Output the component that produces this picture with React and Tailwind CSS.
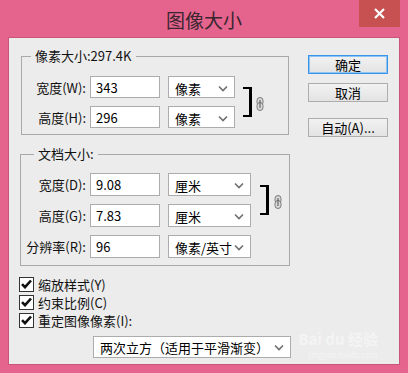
import React from 'react';

const font = { fontFamily: '"Noto Sans CJK SC", "Noto Sans", sans-serif' };

function Chevron() {
  return (
    <svg width="10" height="7" viewBox="0 0 10 7" className="shrink-0">
      <polyline points="1,1.5 5,5.5 9,1.5" fill="none" stroke="#6f6f6f" strokeWidth="1.6" />
    </svg>
  );
}

function LinkIcon() {
  return (
    <svg width="8" height="14" viewBox="0 0 8 14">
      <rect x="1" y="0.5" width="6" height="8" rx="3" fill="#d8d8d8" stroke="#7a7a7a" strokeWidth="1" />
      <rect x="1" y="5.5" width="6" height="8" rx="3" fill="#d8d8d8" stroke="#7a7a7a" strokeWidth="1" />
      <line x1="4" y1="3" x2="4" y2="11" stroke="#555" strokeWidth="1" />
    </svg>
  );
}

function Bracket() {
  return <div className="w-[9px] h-[30px] border-t-2 border-r-[3px] border-b-2 border-black" />;
}

function Row({ label, value, unit, selW, h, labelW }) {
  return (
    <div className={`flex items-center ${h}`}>
      <span className={`${labelW} text-right pr-[4px] text-[13px] text-[#111] leading-none`}>{label}</span>
      <div className="w-[70px] h-full bg-white border border-[#acacac] flex items-center pl-[5px] text-[13px] text-black leading-none">
        {value}
      </div>
      <div className={`${selW} h-full ml-[8px] bg-white border border-[#acacac] flex items-center justify-between pl-[6px] pr-[6px] pt-[2px] text-[13px] text-black leading-none`}>
        <span>{unit}</span>
        <Chevron />
      </div>
    </div>
  );
}

function Check({ label }) {
  return (
    <div className="flex items-center h-[18px]">
      <div className="w-[15px] h-[15px] bg-white border border-[#333] flex items-center justify-center">
        <svg width="11" height="10" viewBox="0 0 11 10">
          <path d="M1 5.2 L4 8.2 L10 1.5" fill="none" stroke="#111" strokeWidth="2.6" />
        </svg>
      </div>
      <span className="ml-[4px] text-[13px] text-[#111] leading-none">{label}</span>
    </div>
  );
}

function Button({ children, primary }) {
  return (
    <div
      className={`w-[80px] h-[19px] flex items-center justify-center text-[13px] text-black leading-none bg-gradient-to-b from-[#f2f2f2] to-[#e3e3e3] border ${
        primary ? 'border-[#3a95e8] shadow-[inset_0_0_0_1px_#8cc3f2]' : 'border-[#adadad]'
      }`}
    >
      {children}
    </div>
  );
}

export default function App() {
  return (
    <div className="w-[408px] h-[373px] bg-[#e5648d] flex flex-col" style={font}>
      {/* Title bar */}
      <div className="relative h-[37px] shrink-0 flex items-center justify-center">
        <span className="text-[19px] text-[#3a2630] leading-none mt-[2px]">图像大小</span>
        <div className="absolute top-0 right-[8px] w-[41px] h-[27px] bg-[#c75050] flex items-center justify-center">
          <svg width="11" height="11" viewBox="0 0 11 11">
            <path d="M1 1 L10 10 M10 1 L1 10" stroke="white" strokeWidth="2.2" />
          </svg>
        </div>
      </div>

      {/* Client area */}
      <div className="relative ml-[8px] w-[392px] h-[328px] bg-[#ececec] border border-[#c9557c] flex">
        <div className="flex flex-col w-[282px]">
          {/* Pixel dimensions */}
          <div className="relative mt-[18px] ml-[12px] w-[268px] h-[79px] border border-[#a9a9a9] pt-[19px]">
            <span className="absolute -top-[9px] left-[9px] px-[4px] bg-[#ececec] text-[13px] text-[#111] leading-[16px]">
              像素大小:297.4K
            </span>
            <div className="flex items-center">
              <div className="flex flex-col gap-[8px]">
                <Row label="宽度(W):" value="343" unit="像素" selW="w-[67px]" h="h-[22px]" labelW="w-[68px]" />
                <Row label="高度(H):" value="296" unit="像素" selW="w-[67px]" h="h-[22px]" labelW="w-[68px]" />
              </div>
              <div className="ml-[8px]"><Bracket /></div>
              <div className="ml-[4px] mt-[4px]"><LinkIcon /></div>
            </div>
          </div>

          {/* Document size */}
          <div className="relative mt-[19px] ml-[11px] w-[270px] h-[112px] border border-[#a9a9a9] pt-[18px]">
            <span className="absolute -top-[9px] left-[13px] px-[4px] bg-[#ececec] text-[13px] text-[#111] leading-[16px]">
              文档大小:
            </span>
            <div className="flex items-center">
              <div className="flex flex-col gap-[8px]">
                <Row label="宽度(D):" value="9.08" unit="厘米" selW="w-[83px]" h="h-[23px]" labelW="w-[69px]" />
                <Row label="高度(G):" value="7.83" unit="厘米" selW="w-[83px]" h="h-[23px]" labelW="w-[69px]" />
              </div>
              <div className="ml-[9px]"><Bracket /></div>
              <div className="ml-[5px] mt-[4px]"><LinkIcon /></div>
            </div>
            <div className="mt-[8px]">
              <Row label="分辨率(R):" value="96" unit="像素/英寸" selW="w-[83px]" h="h-[23px]" labelW="w-[69px]" />
            </div>
          </div>

          {/* Options */}
          <div className="mt-[9px] ml-[10px] flex flex-col">
            <Check label="缩放样式(Y)" />
            <Check label="约束比例(C)" />
            <Check label="重定图像像素(I):" />
          </div>
          <div className="mt-[7px] ml-[84px] w-[198px] h-[22px] bg-white border border-[#acacac] flex items-center justify-between pl-[6px] pr-[6px] text-[13px] text-black leading-none">
            <span>两次立方（适用于平滑渐变）</span>
            <Chevron />
          </div>
        </div>

        {/* Buttons */}
        <div className="ml-[17px] mt-[17px] flex flex-col">
          <Button primary>确定</Button>
          <div className="mt-[9px]"><Button>取消</Button></div>
          <div className="mt-[16px]"><Button>自动(A)...</Button></div>
        </div>

        {/* Watermark */}
        <div className="absolute right-[21px] bottom-[5px] flex flex-col items-end gap-[3px] text-white/45 pointer-events-none">
          <span className="text-[15px] leading-[16px] font-bold">Bai du 经验</span>
          <span className="text-[8px] leading-[9px]">jingyan.baidu.com</span>
        </div>
      </div>
    </div>
  );
}
